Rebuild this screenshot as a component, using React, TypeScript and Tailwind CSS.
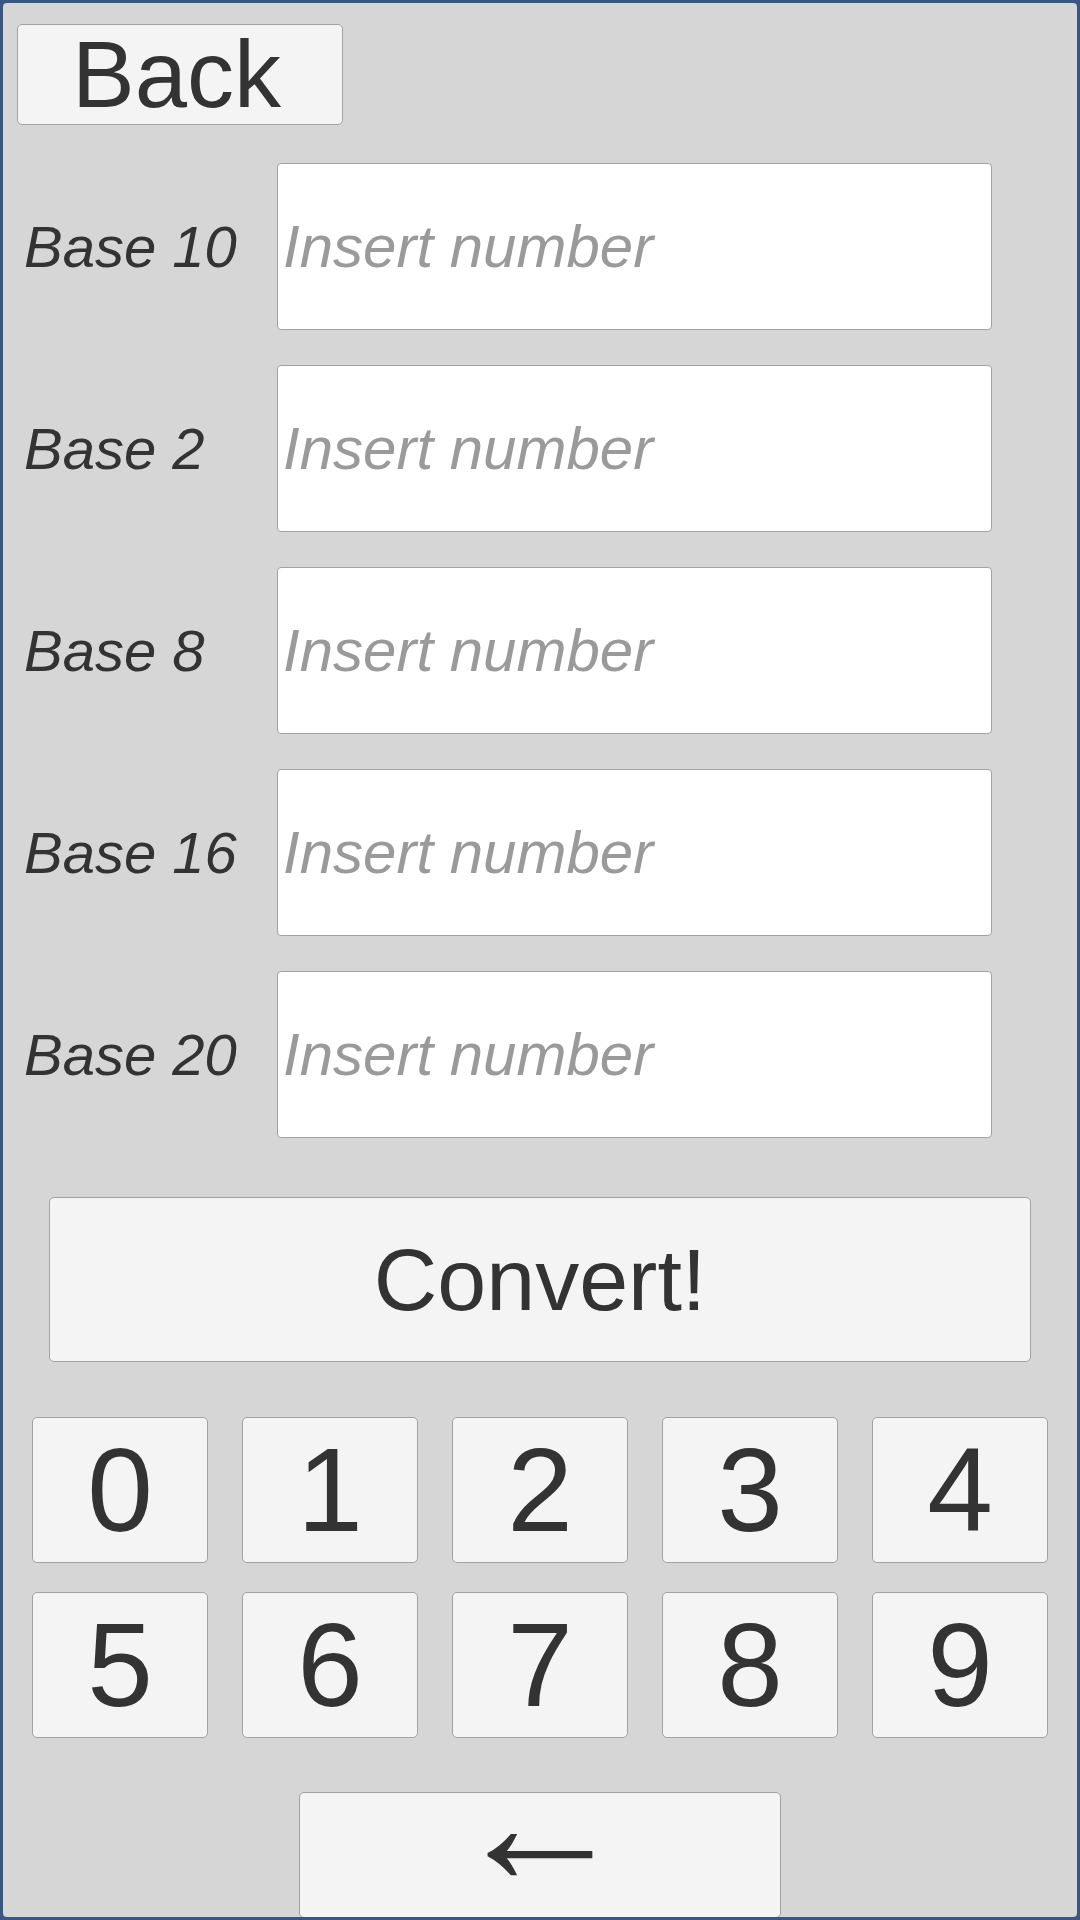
import React from "react";

const bases = ["Base 10", "Base 2", "Base 8", "Base 16", "Base 20"];
const digits = ["0", "1", "2", "3", "4", "5", "6", "7", "8", "9"];

export default function App() {
  return (
    <div
      className="w-[1080px] h-[1920px] bg-[#3a5684] p-[3px] overflow-hidden"
      style={{ fontFamily: '"Liberation Sans", Arial, sans-serif' }}
    >
      <div className="w-full h-full bg-[#d6d6d6] rounded-[4px] overflow-hidden flex flex-col">
        <div className="pl-[14px] pt-[21px] flex">
          <button className="w-[326px] h-[101px] pr-[7px] bg-[#f4f4f4] border border-[#a2a2a2] rounded-[5px] text-[94px] leading-none text-[#333333] flex items-center justify-center">
            Back
          </button>
        </div>

        <div className="mt-[38px] flex flex-col gap-[35px]">
          {bases.map((b) => (
            <div key={b} className="flex items-center">
              <div className="w-[274px] pl-[21px] text-[58px] italic text-[#333333] leading-none">
                {b}
              </div>
              <input
                placeholder="Insert number"
                className="w-[715px] h-[167px] bg-white border border-[#a2a2a2] rounded-[4px] pl-[5px] text-[60px] italic text-[#333333] placeholder:text-[#9a9a9a] outline-none"
              />
            </div>
          ))}
        </div>

        <div className="mt-[59px] pl-[46px] flex">
          <button className="w-[982px] h-[165px] bg-[#f4f4f4] border border-[#a2a2a2] rounded-[5px] text-[88px] leading-none text-[#333333] flex items-center justify-center">
            Convert!
          </button>
        </div>

        <div className="mt-[55px] pl-[29px] grid grid-cols-[repeat(5,176px)] gap-x-[34px] gap-y-[29px]">
          {digits.map((d) => (
            <button
              key={d}
              className="w-[176px] h-[146px] bg-[#f4f4f4] border border-[#a2a2a2] rounded-[5px] text-[118px] leading-none text-[#333333] flex items-center justify-center"
            >
              {d}
            </button>
          ))}
        </div>

        <div className="mt-[54px] pl-[296px] flex">
          <button className="w-[482px] h-[126px] pb-[65px] shrink-0 bg-[#f4f4f4] border border-[#a2a2a2] rounded-[5px] text-[177px] leading-[56px] text-[#333333] flex items-center justify-center">
            ←
          </button>
        </div>
      </div>
    </div>
  );
}
